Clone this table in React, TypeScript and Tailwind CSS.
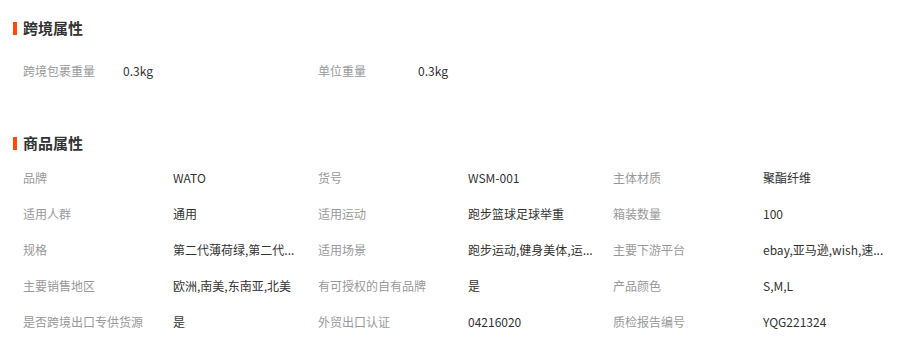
type Attr = { label: string; value: string }

const crossBorder: Attr[] = [
  { label: '跨境包裹重量', value: '0.3kg' },
  { label: '单位重量', value: '0.3kg' },
]

// long values are shortened the way the source page shows them
const product: Attr[] = [
  { label: '品牌', value: 'WATO' },
  { label: '货号', value: 'WSM-001' },
  { label: '主体材质', value: '聚酯纤维' },
  { label: '适用人群', value: '通用' },
  { label: '适用运动', value: '跑步篮球足球举重' },
  { label: '箱装数量', value: '100' },
  { label: '规格', value: '第二代薄荷绿,第二代...' },
  { label: '适用场景', value: '跑步运动,健身美体,运...' },
  { label: '主要下游平台', value: 'ebay,亚马逊,wish,速...' },
  { label: '主要销售地区', value: '欧洲,南美,东南亚,北美' },
  { label: '有可授权的自有品牌', value: '是' },
  { label: '产品颜色', value: 'S,M,L' },
  { label: '是否跨境出口专供货源', value: '是' },
  { label: '外贸出口认证', value: '04216020' },
  { label: '质检报告编号', value: 'YQG221324' },
]

function Title({ text }: { text: string }) {
  return (
    <div className="flex items-center h-[20px] pl-[13px]">
      <span className="w-[4px] h-[13px] bg-[#ff4a00] mr-[6px]" />
      <h2 className="text-[15px] font-bold text-[#333]">{text}</h2>
    </div>
  )
}

export default function App() {
  return (
    <main
      className="w-[920px] h-[344px] bg-white overflow-hidden"
      style={{ fontFamily: '"Microsoft YaHei", "Noto Sans CJK SC", sans-serif' }}
    >
      <div className="pt-[18px]">
        <Title text="跨境属性" />
        <div className="grid grid-cols-[295px_295px_295px] pl-[23px] mt-[15px]">
          {crossBorder.map((a) => (
            <div key={a.label} className="flex items-center h-[36px] text-[12px]">
              <span className="w-[100px] text-[#999]">{a.label}</span>
              <span className="text-[#333] whitespace-nowrap">{a.value}</span>
            </div>
          ))}
        </div>
      </div>

      <div className="mt-[44px]">
        <Title text="商品属性" />
        <div className="grid grid-cols-[295px_295px_295px] pl-[23px] mt-[7px]">
          {product.map((a) => (
            <div key={a.label} className="flex items-center h-[36px] text-[12px]">
              <span className="w-[150px] shrink-0 text-[#999] whitespace-nowrap">{a.label}</span>
              <span className="text-[#333] whitespace-nowrap">{a.value}</span>
            </div>
          ))}
        </div>
      </div>
    </main>
  )
}
